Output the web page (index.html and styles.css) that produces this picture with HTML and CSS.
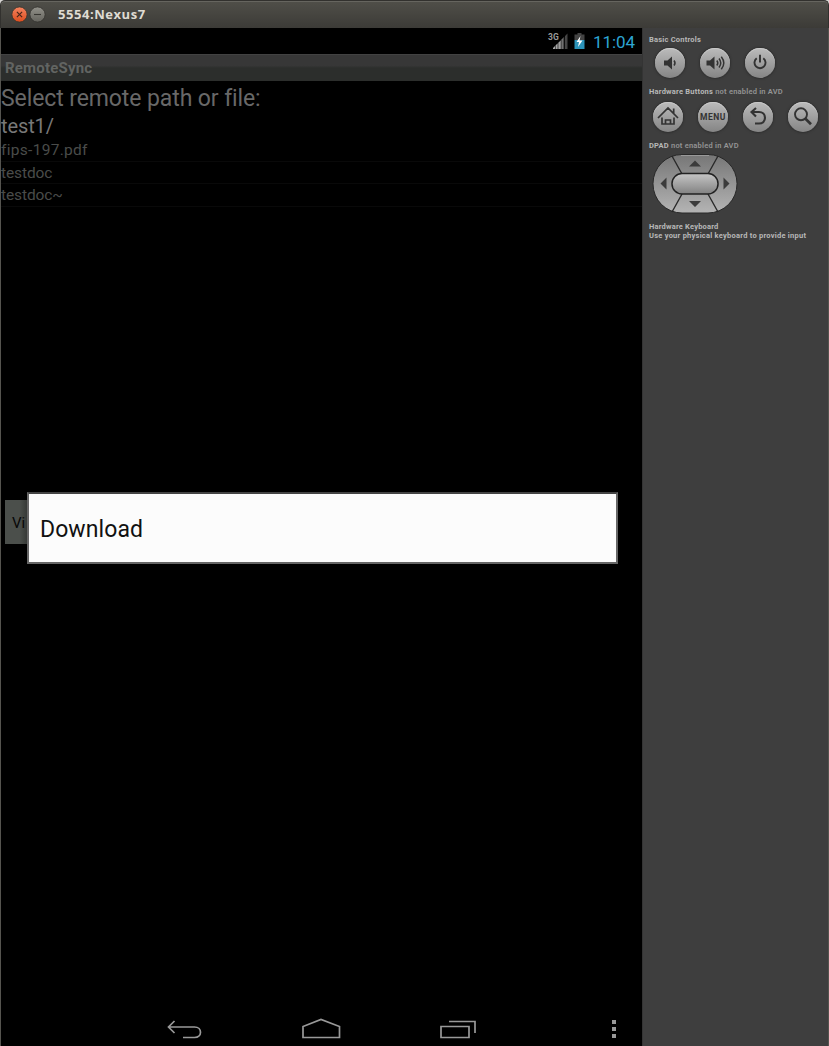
FILE: index.html
```html
<!DOCTYPE html>
<html lang="en">
<head>
<meta charset="utf-8">
<title>5554:Nexus7</title>
<link rel="stylesheet" href="styles.css">
</head>
<body>
<div class="window">
  <header class="titlebar">
    <svg class="window-buttons" width="40" height="20" viewBox="0 0 40 20">
      <defs>
        <linearGradient id="red" x1="0" y1="0" x2="0" y2="1"><stop offset="0" stop-color="#f58460"/><stop offset="1" stop-color="#dd4c1d"/></linearGradient>
        <linearGradient id="grey" x1="0" y1="0" x2="0" y2="1"><stop offset="0" stop-color="#92918a"/><stop offset="1" stop-color="#64635d"/></linearGradient>
      </defs>
      <circle cx="9.5" cy="9.500" r="7.6" fill="url(#red)" stroke="#37332b" stroke-width=".8"/>
      <path d="M6.9 6.900l5.2 5.2M12.1 6.900l-5.2 5.2" stroke="#49261a" stroke-width="1.2"/>
      <circle cx="27.5" cy="9.500" r="7.6" fill="url(#grey)" stroke="#33322e" stroke-width=".8"/>
      <path d="M24 9.500h7" stroke="#373632" stroke-width="1.1"/>
    </svg>
    <h1 class="window-title">5554:Nexus7</h1>
  </header>
  <main class="content">
    <section class="device">
      <div class="status">
        <svg width="36" height="22" viewBox="0 0 36 22">
          <defs><linearGradient id="sig"><stop offset="0" stop-color="#aaa"/><stop offset=".65" stop-color="#999"/><stop offset=".66" stop-color="#4a4a4a"/><stop offset="1" stop-color="#444"/></linearGradient></defs>
          <text class="network" x="0" y="8.5">3G</text>
          <path d="M5 18v-1l2-2v3zM7.500 18v-3.500l2.200-2.200v5.700zM10.300 18v-6.300l2.500-2.500v8.800zM13.500 18V8.500l2.700-2.700v12.200zM17 18V5l2.500-2.500V18z" fill="url(#sig)"/>
          <path d="M29.500 2h4v1.500h3V9h-10V3.500h3z" fill="#444"/>
          <path d="M26.500 9h10v9h-10z" fill="#2b93b9"/>
          <path d="M32.500 5l-4 6H31l-1 5 4.500-6.500h-3z" fill="#fff"/>
        </svg>
        <span class="clock">11:04</span>
      </div>
      <div class="app-title">RemoteSync</div>
      <div class="prompt">Select remote path or file:</div>
      <div class="path">test1/</div>
      <ul class="files">
        <li class="file"><span class="name-pdf">fips-197.pdf</span></li>
        <li class="file">testdoc</li>
        <li class="file">testdoc~</li>
      </ul>
      <div class="view-button">Vi</div>
      <div class="dialog">Download</div>
      <nav class="navbar">
        <svg class="nav-back" width="37" height="22" viewBox="0 0 37 22" fill="none" stroke="#999" stroke-width="1.700"><path d="M8.500 3L2.500 9l6 6M2.500 9h26c8 0 8 10.500 0 10.500H17"/></svg>
        <svg class="nav-home" width="40" height="22" viewBox="0 0 40 22" fill="none" stroke="#999" stroke-width="1.700"><path d="M2 19.500V8.500l18-7 18.500 7v11z"/></svg>
        <svg class="nav-recent" width="38" height="22" viewBox="0 0 38 22" fill="none" stroke="#999" stroke-width="1.700"><path d="M2 8.500h28v11H2zM10 3.500h26V15"/></svg>
        <svg width="6" height="22" viewBox="0 0 6 22" fill="#999"><path d="M1 2h4v4H1zM1 9h4v4H1zM1 16h4v4H1z"/></svg>
      </nav>
    </section>
    <aside class="controls">
      <h2 class="label basic"><b>Basic Controls</b></h2>
      <div class="row basic-row">
        <span class="round"><svg viewBox="0 0 30 30"><path d="M9 12.500h3.500l4.500-4v13l-4.500-4H9z" fill="#333"/><path d="M19 12.500q2 2.500 0 5" fill="none" stroke="#333" stroke-width="1.500"/></svg></span>
        <span class="round"><svg viewBox="0 0 30 30"><path d="M6.500 12.500H10l4.500-4v13l-4.500-4H6.500z" fill="#333"/><path d="M16.800 12.500q2 2.500 0 5M19 10.500q3.500 4.500 0 9M21.300 8.700q5 6.300 0 12.600" fill="none" stroke="#333" stroke-width="1.500"/></svg></span>
        <span class="round"><svg viewBox="0 0 30 30" fill="none" stroke="#333" stroke-width="1.900"><path d="M11.700 10.300a5.500 5.500 0 1 0 6.600 0M15 6.700v7.800"/></svg></span>
      </div>
      <h2 class="label hardware"><b>Hardware Buttons</b> not enabled in AVD</h2>
      <div class="row hardware-row">
        <span class="round"><svg viewBox="0 0 30 30" fill="none" stroke="#333" stroke-width="1.700"><path d="M5 16L15 6l10 10M20.700 11.500V6.500M9 15.500v6.500h12v-6.500M12.500 22v-4h5v4"/></svg></span>
        <span class="round menu">MENU</span>
        <span class="round"><svg viewBox="0 0 30 30" fill="none" stroke="#333" stroke-width="2.100"><path d="M13 6L8.500 10l4.500 4.500M8.500 10h7.500c8 0 8 11.500 0 11.500h-4"/></svg></span>
        <span class="round"><svg viewBox="0 0 30 30" fill="none" stroke="#333"><circle cx="13" cy="12.300" r="6" stroke-width="1.900"/><path d="M17 16.300l6 6" stroke-width="2.700"/></svg></span>
      </div>
      <h2 class="label dpad-label"><b>DPAD</b> not enabled in AVD</h2>
      <svg class="dpad" width="86" height="62" viewBox="0 0 86 62">
        <defs><linearGradient id="pad" x1="0" y1="0" x2="0" y2="1"><stop offset="0" stop-color="#767676"/><stop offset="1" stop-color="#b4b4b4"/></linearGradient>
        <linearGradient id="center" x1="0" y1="0" x2="0" y2="1"><stop offset="0" stop-color="#c6c6c6"/><stop offset="1" stop-color="#818181"/></linearGradient></defs>
        <rect x="1" y="1.500" width="84" height="58.500" rx="29" fill="url(#pad)" stroke="#282828"/>
        <path d="M29 2.500h28" stroke="#999"/>
        <path d="M20 3l10 18M66 3L56 21M20 59l10-18M66 59L56 41" stroke="#292929" stroke-width="1.400"/>
        <rect x="20" y="20.500" width="46" height="20.500" rx="10" fill="url(#center)" stroke="#222" stroke-width="1.500"/>
        <path d="M37 13.500l6-6 6 6zM37 48h12l-6 6zM14.500 24.500v12L8.500 30.500zM71.500 24.500v12l6-6z" fill="#3b3b3b"/>
      </svg>
      <p class="label keyboard"><b>Hardware Keyboard</b><br><b class="instruction">Use your physical keyboard to provide input</b></p>
    </aside>
  </main>
</div>
</body>
</html>
```

FILE: styles.css
```css
* { box-sizing: border-box; }
body { margin: 0; overflow: hidden; background: #d7d6d3; }
svg { display: block; overflow: visible; }
.window { width: 829px; height: 1046px; display: flex; flex-direction: column; font-family: Roboto, sans-serif; }
.titlebar { height: 28px; display: flex; align-items: center; padding-left: 10px; background: linear-gradient(#504f49, #3c3b37); border: solid #32312e; border-width: 1px 1px 0; border-radius: 5px 5px 0 0; box-shadow: inset 0 1px #66655f; }
.window-buttons { margin-left: -1px; }
.window-title { margin: 0 0 0 8px; padding-bottom: 1px; font: 700 13px/26px "Open Sans", sans-serif; color: #dfdbd2; letter-spacing: .55px; }
.content { height: 1018px; display: flex; border: solid #55544f; border-width: 0 1px; }
.device { width: 641px; flex: none; height: 1018px; background: #000; display: flex; flex-direction: column; position: relative; }
.status { height: 26px; display: flex; align-items: center; justify-content: flex-end; padding: 2px 6px 0 0; }
.network { font: 700 8.500px Roboto, sans-serif; fill: #999; }
.clock { margin-left: 9px; color: #2da5d3; font-size: 17px; line-height: 26px; letter-spacing: -.05px; width: 43px; white-space: nowrap; }
.app-title { height: 27px; padding-left: 4px; background: linear-gradient(#373737 0 40%, #2c2e2c 50% 100%); border-top: 1px solid #424242; font-size: 15px; font-weight: 700; line-height: 27px; letter-spacing: .2px; color: #626462; }
.prompt { height: 34px; font-size: 23px; line-height: 35px; letter-spacing: -.1px; color: #686868; }
.path { height: 24px; font-size: 20px; line-height: 22px; letter-spacing: -.1px; color: #787878; }
.files { list-style: none; margin: 0; padding: 0; font-size: 15.500px; color: #4a4c4a; }
.file { height: 22.500px; line-height: 22px; letter-spacing: -.1px; border-bottom: 1px solid #090909; }
.name-pdf { letter-spacing: .3px; }
.view-button { position: absolute; left: 4px; top: 472px; width: 24px; height: 44px; padding-left: 7px; background: linear-gradient(90deg, #4b4f4b 60%, #303330); font-size: 15px; line-height: 46px; color: #080808; }
.dialog { position: absolute; left: 26px; top: 464px; width: 591px; height: 72px; padding-left: 11px; border: 2px solid #666; border-top-color: #444; background: #fcfcfc; color: #111; font-size: 23px; line-height: 72px; letter-spacing: .08px; }
.navbar { height: 34px; margin-top: auto; display: flex; align-items: center; padding-left: 165px; padding-bottom: 1px; }
.nav-home { margin-left: 98px; }
.nav-recent { margin: 0 134px 0 98px; }
.controls { flex: 1; padding: 7px 0 0 6px; background: #3e3e3e; border-left: 1px solid #343434; }
.label { margin: 0; font-size: 7.500px; font-weight: 600; line-height: 9px; letter-spacing: .22px; color: #949494; white-space: nowrap; }
.label b { color: #b8b8b8; font-weight: 700; }
.basic { letter-spacing: .22px; }
.row { display: flex; gap: 15px; }
.basic-row { padding: 4px 0 0 6px; height: 43px; }
.hardware-row { padding: 6px 0 0 4px; height: 45px; }
.round { width: 30px; height: 30px; border-radius: 50%; background: linear-gradient(#bbb, #858585); box-shadow: 0 0 2px 1px #303030, inset 0 1px #c8c8c8; }
.round svg { width: 30px; height: 30px; }
.menu { font-size: 8.500px; font-weight: 700; line-height: 31px; text-align: center; color: #333; letter-spacing: .5px; }
.dpad { margin: 3px 0 0 3px; }
.keyboard { margin-top: 7px; letter-spacing: .2px; }
.instruction { letter-spacing: .24px; }
```
